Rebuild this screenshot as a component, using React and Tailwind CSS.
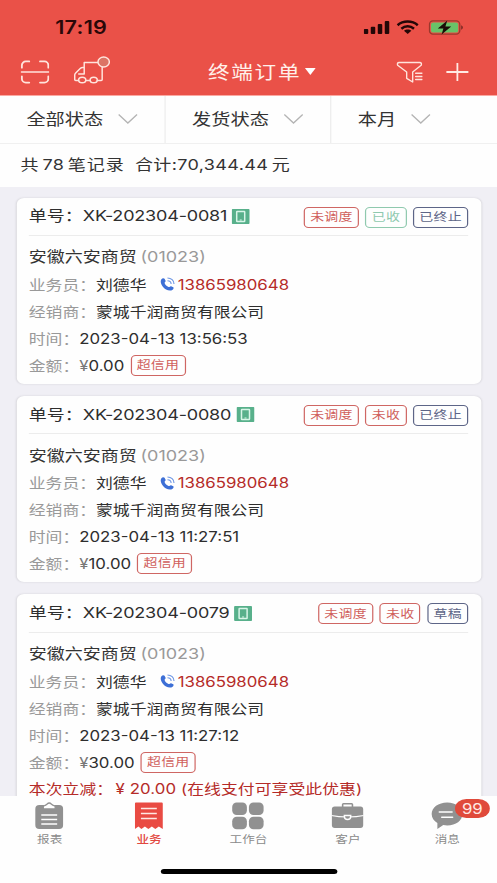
import React from "react";

const orders = [
  {
    no: "XK-202304-0081",
    time: "2023-04-13 13:56:53",
    amount: "0.00",
    tags: [
      { text: "未调度", color: "red" },
      { text: "已收", color: "green" },
      { text: "已终止", color: "blue" },
    ],
  },
  {
    no: "XK-202304-0080",
    time: "2023-04-13 11:27:51",
    amount: "10.00",
    tags: [
      { text: "未调度", color: "red" },
      { text: "未收", color: "red" },
      { text: "已终止", color: "blue" },
    ],
  },
  {
    no: "XK-202304-0079",
    time: "2023-04-13 11:27:12",
    amount: "30.00",
    discount: "20.00",
    tags: [
      { text: "未调度", color: "red" },
      { text: "未收", color: "red" },
      { text: "草稿", color: "blue" },
    ],
  },
];

const tagColors = {
  red: "border-[#cf6663] text-[#d0605c]",
  green: "border-[#8fc9ae] text-[#8fc9ae]",
  blue: "border-[#5d6587] text-[#5d6587]",
};

function Tag({ color, children }) {
  return (
    <span
      className={`flex h-[21px] items-center rounded-[4px] border-[1.3px] px-[4.3px] pt-[1px] text-[11.6px] leading-none tracking-[0.2px] ${tagColors[color]}`}
    >
      {children}
    </span>
  );
}

function Icon({ className, box, children }) {
  return (
    <svg className={`shrink-0 ${className}`} viewBox={box} preserveAspectRatio="none" fill="none">
      {children}
    </svg>
  );
}

function StatusBar() {
  return (
    <div className="flex h-[55px] pt-[17px] pl-[46px] pr-[28px]">
      <div className="h-[21px] text-[18px] leading-[21px] font-semibold tracking-[0.2px] text-[#2a0808]">
        17:19
      </div>
      <div className="ml-auto flex pt-[3px]">
        <Icon className="h-[15px] w-[22.5px]" box="0 0 27 15">
          <g fill="#240707">
            <rect x="0" y="9" width="4.5" height="5" rx="1" />
            <rect x="7" y="6.7" width="4.5" height="7.3" rx="1" />
            <rect x="14" y="4" width="4.5" height="10" rx="1" />
            <rect x="21" y="1" width="4.5" height="13" rx="1" />
          </g>
        </Icon>
        <Icon className="ml-[5px] h-[15px] w-[19.2px]" box="0 0 23 15">
          <g stroke="#240707" strokeWidth="2.5">
            <path d="M1.4 5.2C7 0.4 16 0.4 21.6 5.2" />
            <path d="M5.2 8.7C8.8 5.5 14.2 5.5 17.8 8.7" />
          </g>
          <path d="M7.8 10.8c2-1.8 5.4-1.8 7.4 0L11.5 14z" fill="#240707" />
        </Icon>
        <Icon className="ml-[7.5px] h-[15px] w-[29.2px]" box="0 0 35 15">
          <rect x="0.8" y="0.9" width="30.4" height="13.2" rx="3.6" stroke="#9b382c" strokeWidth="1.3" />
          <rect x="2.4" y="2.4" width="27.2" height="10.2" rx="2.2" fill="#69c268" />
          <path d="M32.6 5.3c2.2 0.8 2.2 3.6 0 4.4z" fill="#7b2a24" />
          <path d="M18.7 0.6L9.2 8.4h5.6L13 14.4l9.6-8h-5.8z" fill="#1b0d08" />
        </Icon>
      </div>
    </div>
  );
}

function NavBar() {
  return (
    <div className="flex h-[40px] pl-[16.7px]">
      <Icon className="mt-[5px] h-[24px] w-[24.5px]" box="0 0 30 25">
        <g stroke="#ffe4dc" strokeWidth="1.9" strokeLinecap="round">
          <path d="M1.5 8V5.5a4 4 0 0 1 4-4H9" />
          <path d="M20 1.5h4.5a4 4 0 0 1 4 4V8" />
          <path d="M1.5 17v2.5a4 4 0 0 0 4 4H9" />
          <path d="M20 23.5h4.5a4 4 0 0 0 4-4V17" />
          <path d="M1 12.5h28" strokeWidth="1.5" />
        </g>
      </Icon>
      <Icon className="mt-[1px] ml-[20px] h-[29px] w-[31.6px]" box="0 0 38 29">
        <g stroke="#ffe4dc" strokeWidth="1.5" strokeLinejoin="round" strokeLinecap="round">
          <path d="M25 6.5H11v5H9.500Q8 11.500 7 12.500L2.500 17Q1.500 18 1.500 19V23.500Q1.500 24.500 2.500 24.500H5.400" />
          <path d="M12.600 24.500h4.300M24.100 24.500h3.900Q29 24.500 29 23.500V11" />
          <path d="M11 12v6H5.500" />
          <ellipse cx="9" cy="24" rx="3.6" ry="2.8" />
          <ellipse cx="20.5" cy="24" rx="3.6" ry="2.8" />
          <ellipse cx="30.5" cy="6" rx="5.7" ry="4.9" fill="#dc7465" />
        </g>
      </Icon>
      <div className="ml-[80.5px] flex h-[34px] items-center text-[18px] tracking-[1.4px] text-[#fff0ea]">
        终端订单
      </div>
      <Icon className="mt-[13px] ml-[3.3px] h-[7px] w-[9px]" box="0 0 10 7">
        <path d="M0 0h10L5 7z" fill="#fff" />
      </Icon>
      <Icon className="mt-[6px] ml-[66.5px] h-[23px] w-[22.5px]" box="0 0 27 23">
        <g stroke="#ffe4dc" strokeWidth="1.4" strokeLinejoin="round" strokeLinecap="round">
          <path d="M16.5 21L10.5 17.3V11L1.5 4.3C0.8 3 1.3 1.5 3 1.5h20.5c1.7 0 2.2 1.5 1.5 2.8L16.5 11z" />
          <path d="M19.5 12.3h6.5M19.5 15.5h6.5M19.5 18.5h6.5" />
        </g>
      </Icon>
      <Icon className="mt-[7px] ml-[18.8px] h-[20px] w-[20px]" box="0 0 24 20">
        <path d="M1 10h22M12 1v18" stroke="#ffeae4" strokeWidth="1.8" />
      </Icon>
    </div>
  );
}

function Filter({ label, className }) {
  return (
    <div className={`flex items-center pb-[1px] text-[16px] text-[#333] ${className}`}>
      {label}
      <Icon className="ml-[12px] h-[12px] w-[17px]" box="0 0 20 12">
        <path d="M1 1.5l9 8.5 9-8.5" stroke="#b4b4b4" strokeWidth="1.3" />
      </Icon>
    </div>
  );
}

function Row({ label, children }) {
  return (
    <div className="flex h-[27px] items-center text-[14px] whitespace-pre text-[#2e2e2e]">
      <span className="text-[#999]">{label}</span>
      {children}
    </div>
  );
}

function OrderCard({ order }) {
  return (
    <div className="mb-[12px] shrink-0 rounded-[6px] bg-[#fefefe] px-[10.5px] pt-[0.3px] pb-[5px] shadow-[0_0_2px_rgba(0,0,0,0.12)]">
      <div className="flex h-[38px] items-center border-b border-[#ececec] text-[15px] text-[#2e2e2e]">
        <span className="w-[45px]">单号：</span>
        <span className="tracking-[-0.16px]">{order.no}</span>
        <Icon className="ml-[4px] h-[15px] w-[15px]" box="0 0 18 15">
          <rect width="18" height="15" rx="1" fill="#58b08b" />
          <rect x="5" y="2.5" width="8" height="10" rx="0.5" stroke="#d8f5e8" strokeWidth="1.5" />
          <path d="M8 11h2" stroke="#d8f5e8" />
        </Icon>
        <div className="ml-auto flex gap-[5.4px] pt-[1.5px]">
          {order.tags.map((tag, idx) => (
            <Tag key={idx} color={tag.color}>
              {tag.text}
            </Tag>
          ))}
        </div>
      </div>
      <div className="mt-[8px] flex h-[27px] items-center text-[15px] text-[#333]">
        安徽六安商贸
        <span className="ml-[3px] text-[#999]">(01023)</span>
      </div>
      <Row label="业务员：">
        刘德华
        <Icon className="mr-[2px] ml-[11px] h-[14px] w-[13px]" box="0 0 15 14">
          <path
            d="M1.5 2.5C2.5 1 4 0.8 4.7 1.8l1 2c0.4 1-1.2 1.4-0.9 2.4 0.6 1.7 2 3 3.7 3.7 1 0.4 1.5-1.1 2.5-0.7l2 1.1c1 0.7 0 2.2-1.2 2.9C9 14.4 5 12.5 2.9 9.5 1.3 7.2 0.4 4.5 1.5 2.5z"
            fill="#3d6fd6"
          />
          <g stroke="#6f97e4" strokeWidth="1.1">
            <path d="M7.5 1c3.6 0 6.3 2.5 6.3 6" />
            <path d="M7.5 3.7c2 0 3.5 1.3 3.5 3.3" />
          </g>
        </Icon>
        <span className="text-[#b52b28]">13865980648</span>
      </Row>
      <Row label="经销商：">蒙城千润商贸有限公司</Row>
      <Row label="时间：">{order.time}</Row>
      <Row label="金额：">
        <span className="text-[#777]">¥</span>
        {order.amount}
        <span className="ml-[5px]">
          <Tag color="red">超信用</Tag>
        </span>
      </Row>
      {order.discount && (
        <div className="flex h-[26px] items-center text-[14px] leading-[14px] tracking-[0.06px] whitespace-pre text-[#b52b28]">
          <span className="mr-[2px]">本次立减：</span>¥ {order.discount} (在线支付可享受此优惠)
        </div>
      )}
    </div>
  );
}

function Tab({ label, active, children }) {
  return (
    <div
      className={`relative flex flex-1 flex-col items-center pt-[6px] text-[10.5px] leading-[16px] ${
        active ? "font-medium text-[#e2473f]" : "text-[#8b8b8b]"
      }`}
    >
      <div className="flex h-[28px]">{children}</div>
      <span className="mt-[2px]">{label}</span>
    </div>
  );
}

function TabBar() {
  return (
    <div className="h-[87px] shrink-0 bg-[#fefefe]">
      <div className="flex h-[73px]">
        <Tab label="报表">
          <Icon className="h-[28px] w-[24px]" box="0 0 29 28">
            <rect x="0.5" y="3" width="28" height="24" rx="4" fill="#919191" />
            <path
              d="M8.5 7V4.8Q8.5 3.8 9.8 3.6C12 3.2 12.5 1 14.5 1s2.5 2.2 4.7 2.6Q20.5 3.8 20.5 4.8V7z"
              fill="#fefefe"
              stroke="#919191"
              strokeWidth="1.3"
            />
            <path d="M6.5 13h16M6.5 17.5h16M6.5 22h16" stroke="#fefefe" strokeWidth="1.5" />
          </Icon>
        </Tab>
        <Tab label="业务" active>
          <Icon className="h-[28px] w-[24px]" box="0 0 29 28">
            <path
              d="M0.5 1.5Q0.5 0.5 1.5 0.5h26Q28.5 0.5 28.5 1.5V27l-4-2.5-3.5 2.5-3.5-2.5-3.5 2.5-3.5-2.5L7 27l-3-2.5L0.5 27z"
              fill="#e94b43"
            />
            <path d="M6.5 6.5h16M6.5 11.5h16M6.5 16.5h16" stroke="#ffe9e4" strokeWidth="1.6" />
          </Icon>
        </Tab>
        <Tab label="工作台">
          <Icon className="h-[28px] w-[27px]" box="0 0 32 28">
            <g fill="#919191">
              <rect x="0.5" y="0.5" width="14.5" height="12.5" rx="4.5" />
              <rect x="17" y="0.5" width="14.5" height="12.5" rx="4.5" />
              <rect x="0.5" y="14.7" width="14.5" height="12.5" rx="4.5" />
              <rect x="17" y="14.7" width="14.5" height="12.5" rx="4.5" />
            </g>
          </Icon>
        </Tab>
        <Tab label="客户">
          <Icon className="h-[28px] w-[27px]" box="0 0 33 28">
            <path d="M11.5 6V2.6Q11.5 1.7 12.4 1.7h8.200Q21.5 1.7 21.5 2.6V6" stroke="#919191" strokeWidth="1.6" />
            <rect x="0.5" y="4.5" width="32" height="21.5" rx="3" fill="#919191" />
            <path d="M0 13.5q7 1.5 16.5 1.5T33 13.5" stroke="#fefefe" strokeWidth="1.1" />
            <path
              d="M13.3 13.5h6.4v1.3a3.2 2.6 0 0 1-6.4 0z"
              fill="#919191"
              stroke="#fefefe"
              strokeWidth="1.5"
            />
          </Icon>
        </Tab>
        <Tab label="消息">
          <Icon className="h-[28px] w-[27px]" box="0 0 33 28">
            <path
              d="M16.5 0.5c9 0 15.5 5 15.5 11.5S25.5 23.5 16.5 23.5c-1.5 0-2.7-0.1-4-0.4L6.5 27v-6C3 19 0.7 15.8 0.7 12 0.7 5.5 7.5 0.5 16.5 0.5z"
              fill="#919191"
            />
            <path d="M8.5 10h13M11 15.3h11" stroke="#fefefe" strokeWidth="1.6" strokeLinecap="round" />
          </Icon>
          <span className="absolute top-[3px] left-[48px] flex h-[19px] w-[28.5px] items-center justify-center rounded-full bg-[#e04a3b] text-[14px] text-[#ffe9e4]">
            99
          </span>
        </Tab>
      </div>
      <div className="mx-auto h-[5px] w-[147px] rounded-full bg-black" />
    </div>
  );
}

export default function App() {
  return (
    <div className="h-[883px] w-[497px] overflow-hidden">
      {/* 414pt wide layout spread over the full width */}
      <div className="flex h-[883px] w-[414px] origin-top-left scale-x-[1.2005] flex-col bg-[#f0eff5] font-['Inter','Noto_Sans_CJK_SC',sans-serif]">
        <div className="h-[96px] shrink-0 border-b border-[#fba9a2] bg-[#ea5148]">
          <StatusBar />
          <NavBar />
        </div>
        <div className="flex h-[48px] shrink-0 border-b border-[#f0f0f0] bg-[#fefefe]">
          <Filter label="全部状态" className="w-[138px] border-r border-[#ececec] pl-[22px]" />
          <Filter label="发货状态" className="w-[138px] border-r border-[#ececec] pl-[22px]" />
          <Filter label="本月" className="pl-[22px]" />
        </div>
        <div className="flex h-[42.5px] shrink-0 items-center bg-[#fefefe] pl-[17px] text-[15px] tracking-[0.3px] whitespace-pre text-[#333]">
          <span>共</span>
          <span className="mx-[3px]">78</span>
          <span className="tracking-[0.8px]">笔记录</span>
          <span className="ml-[8.5px]">合计:</span>
          <span className="mr-[3px]">70,344.44</span>
          <span>元</span>
        </div>
        <div className="flex min-h-0 flex-1 flex-col overflow-hidden px-[13.5px] pt-[11.2px]">
          {orders.map((order) => (
            <OrderCard key={order.no} order={order} />
          ))}
        </div>
        <TabBar />
      </div>
    </div>
  );
}
